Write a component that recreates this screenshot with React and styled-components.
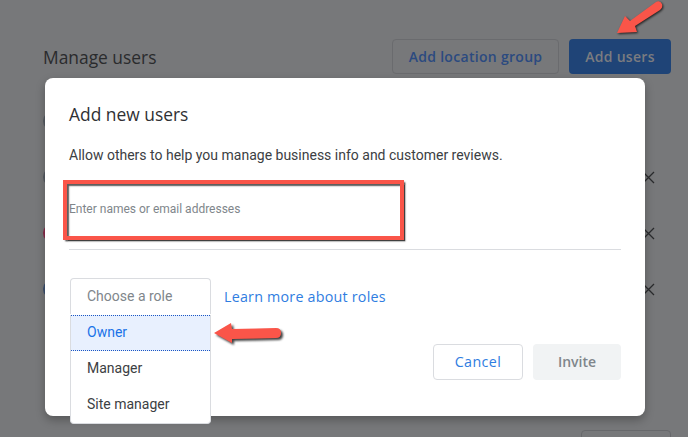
import React from 'react';
import styled, { createGlobalStyle } from 'styled-components';

const GlobalStyle = createGlobalStyle`
  html, body {
    margin: 0;
    padding: 0;
  }
  body {
    font-family: Roboto, "Liberation Sans", sans-serif;
    background: #77787a;
    overflow: hidden;
  }
`;

const roles = ['Owner', 'Manager', 'Site manager'];
const rowColors = ['#565c63', '#565c63', '#8a2b4b', '#3b5070'];

export default function App() {
  return (
    <Page>
      <GlobalStyle />
      <Background>
        <Header>
          <PageTitle>Manage users</PageTitle>
          <HeaderActions>
            <OutlineAction>Add location group</OutlineAction>
            <PrimaryAction>Add users</PrimaryAction>
          </HeaderActions>
        </Header>
        <UserList>
          {rowColors.map((color, i) => (
            <UserRow key={i}>
              <Avatar $color={color} />
              {i > 0 && (
                <CloseIcon viewBox="0 0 13 13">
                  <path d="M1 1l11 11M12 1L1 12" />
                </CloseIcon>
              )}
            </UserRow>
          ))}
        </UserList>
        <FooterAction />
      </Background>

      <Modal>
        <ModalTitle>Add new users</ModalTitle>
        <ModalText>Allow others to help you manage business info and customer reviews.</ModalText>
        <NameField>
          <Placeholder>Enter names or email addresses</Placeholder>
          <Highlight />
        </NameField>
        <RoleRow>
          <RoleSelect>Choose a role</RoleSelect>
          <LearnLink>Learn more about roles</LearnLink>
          <RoleMenu>
            {roles.map((role, i) => (
              <RoleOption key={role} $active={i === 0}>{role}</RoleOption>
            ))}
          </RoleMenu>
        </RoleRow>
        <ModalActions>
          <CancelButton>Cancel</CancelButton>
          <InviteButton>Invite</InviteButton>
        </ModalActions>
      </Modal>

      <TopArrow viewBox="612 0 56 40">
        <path d="M617 33 L625 16 L630 21 L656 2 Q660 0 662 4 Q663 8 660 10 L635 26 L637 32 Z" />
      </TopArrow>
      <SideArrow viewBox="210 318 78 30">
        <path d="M214 333 L231 323 L232 329 L276 328 Q281 328 281 333 Q281 338 276 338 L232 339 L232 343 Z" />
      </SideArrow>
    </Page>
  );
}

const Page = styled.div`
  position: relative;
  width: 688px;
  height: 437px;
  overflow: hidden;
  background: #77787a;
`;

const Background = styled.div`
  display: flex;
  flex-direction: column;
  height: 100%;
  box-sizing: border-box;
  padding: 39px 17px 0 43px;
`;

const Header = styled.div`
  display: flex;
  align-items: center;
  justify-content: space-between;
`;

const PageTitle = styled.h1`
  margin: 0;
  font: 400 17.4px "Open Sans", Roboto, sans-serif;
  color: #2a2b2d;
`;

const HeaderActions = styled.div`
  display: flex;
  gap: 10px;
`;

const OutlineAction = styled.div`
  display: flex;
  align-items: center;
  justify-content: center;
  width: 167px;
  height: 35px;
  box-sizing: border-box;
  padding-bottom: 1px;
  border: 1px solid #6a6b6e;
  border-radius: 4px;
  font: 600 14px "Open Sans", sans-serif;
  letter-spacing: 0.3px;
  color: #2b4a80;
`;

const PrimaryAction = styled.div`
  display: flex;
  align-items: center;
  justify-content: center;
  width: 102px;
  height: 35px;
  box-sizing: border-box;
  padding-bottom: 1px;
  border-radius: 4px;
  background: #1f4477;
  font: 600 14px "Open Sans", sans-serif;
  letter-spacing: 0.3px;
  color: #7b7c80;
`;

const UserList = styled.div`
  display: flex;
  flex-direction: column;
  gap: 36px;
  margin-top: 37px;
`;

const UserRow = styled.div`
  display: flex;
  align-items: center;
  justify-content: space-between;
  height: 20px;
`;

const Avatar = styled.div`
  width: 20px;
  height: 20px;
  border-radius: 50%;
  background: ${(p) => p.$color};
`;

const CloseIcon = styled.svg`
  width: 13px;
  height: 13px;
  margin-right: 16px;
  fill: none;
  stroke: #2a2b2d;
  stroke-width: 1.3;
`;

const FooterAction = styled.div`
  align-self: flex-end;
  width: 90px;
  height: 30px;
  margin-top: auto;
  margin-bottom: -23px;
  box-sizing: border-box;
  border: 1px solid #67686b;
  border-radius: 4px;
`;

const Modal = styled.div`
  position: absolute;
  left: 45px;
  top: 78px;
  width: 600px;
  height: 338px;
  box-sizing: border-box;
  padding: 25px 24px 0;
  background: #fff;
  border-radius: 8px;
  box-shadow: 0 4px 10px rgba(0, 0, 0, 0.28);
`;

const ModalTitle = styled.h2`
  margin: 0;
  font: 400 17.4px/22px "Open Sans", Roboto, sans-serif;
  color: #2f3033;
`;

const ModalText = styled.p`
  margin: 21px 0 0;
  font: 400 14px/18px Roboto, sans-serif;
  color: #3c4043;
`;

const NameField = styled.div`
  position: relative;
  height: 70px;
  margin-top: 16px;
  box-sizing: border-box;
  padding-top: 18px;
  border-bottom: 1px solid #dadce0;
`;

const Placeholder = styled.span`
  font: 400 12px/16px Roboto, sans-serif;
  color: #80868b;
`;

const Highlight = styled.div`
  position: absolute;
  left: -6px;
  top: 0;
  width: 341px;
  height: 60px;
  box-sizing: border-box;
  border: 4px solid #fa5549;
  box-shadow: 1.5px 1.5px 1.5px rgba(0, 0, 0, 0.75), inset 2px 2px 1.5px rgba(0, 0, 0, 0.65);
`;

const RoleRow = styled.div`
  position: relative;
  display: flex;
  align-items: center;
  gap: 13px;
  margin: 28px 0 0 1px;
`;

const RoleSelect = styled.div`
  display: flex;
  align-items: center;
  width: 141px;
  height: 36px;
  box-sizing: border-box;
  padding: 0 0 2px 16px;
  border: 1px solid #dadce0;
  border-bottom: 0;
  border-radius: 4px 4px 0 0;
  font: 400 14px Roboto, sans-serif;
  color: #80868b;
`;

const LearnLink = styled.span`
  font: 500 14.3px "Open Sans", sans-serif;
  letter-spacing: 0.22px;
  color: #2f7de1;
`;

const RoleMenu = styled.div`
  position: absolute;
  left: 0;
  top: 37px;
  width: 141px;
  box-sizing: border-box;
  background: #fff;
  border: 1px solid #dadce0;
  border-top: 0;
  border-radius: 0 0 4px 4px;
`;

const RoleOption = styled.div`
  display: flex;
  align-items: center;
  height: 36px;
  box-sizing: border-box;
  padding: 0 0 2px 16px;
  font: 400 14px Roboto, sans-serif;
  color: ${(p) => (p.$active ? '#1a73e8' : '#3c4043')};
  background: ${(p) => (p.$active ? '#e8f0fe' : 'transparent')};
  border-top: ${(p) => (p.$active ? '1px dotted #1a56c4' : '0')};
  border-bottom: ${(p) => (p.$active ? '1px dotted #1a56c4' : '0')};
`;

const ModalActions = styled.div`
  display: flex;
  justify-content: flex-end;
  gap: 10px;
  margin-top: 30px;
`;

const CancelButton = styled.div`
  display: flex;
  align-items: center;
  justify-content: center;
  width: 90px;
  height: 36px;
  box-sizing: border-box;
  padding-bottom: 2px;
  border: 1px solid #dadce0;
  border-radius: 4px;
  font: 500 14.3px "Open Sans", sans-serif;
  letter-spacing: 0.4px;
  color: #2f7de1;
`;

const InviteButton = styled.div`
  display: flex;
  align-items: center;
  justify-content: center;
  width: 88px;
  height: 36px;
  box-sizing: border-box;
  padding-bottom: 2px;
  border-radius: 4px;
  background: #f1f3f4;
  font: 600 14px "Open Sans", sans-serif;
  color: #80868b;
`;

const TopArrow = styled.svg`
  position: absolute;
  left: 612px;
  top: 0;
  width: 56px;
  height: 40px;
  fill: #fa5549;
  filter: drop-shadow(1.5px 1.5px 1px rgba(0, 0, 0, 0.75));
`;

const SideArrow = styled.svg`
  position: absolute;
  left: 210px;
  top: 318px;
  width: 78px;
  height: 30px;
  fill: #fa5549;
  filter: drop-shadow(2px 2px 1px rgba(0, 0, 0, 0.75));
`;
